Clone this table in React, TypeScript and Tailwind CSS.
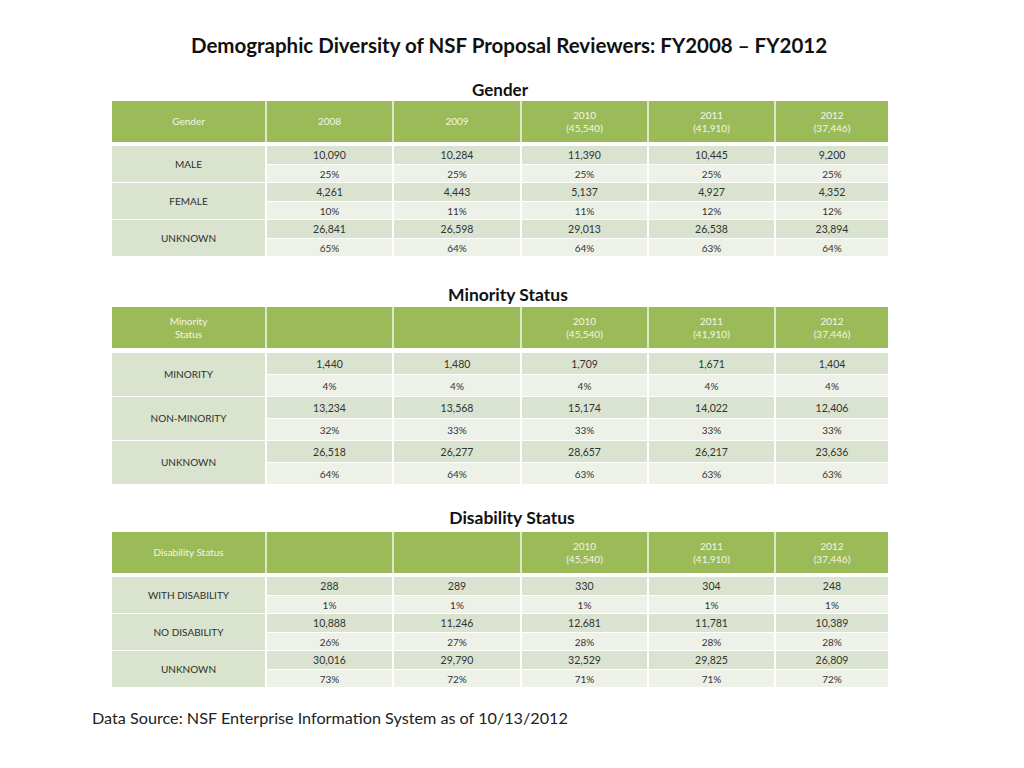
const font = { fontFamily: 'Lato, "Open Sans", sans-serif' }

type Group = { label: string; counts: string[]; pcts: string[] }

type Table = {
	title: string
	corner: string[]
	years: string[][]
	groups: Group[]
	countH: string
	pctH: string
	bodyGap: string
}

const tables: Table[] = [
	{
		title: 'Gender',
		corner: ['Gender'],
		years: [['2008'], ['2009'], ['2010', '(45,540)'], ['2011', '(41,910)'], ['2012', '(37,446)']],
		countH: 'h-[18px]',
		pctH: 'h-[17px]',
		bodyGap: 'mt-[4px]',
		groups: [
			{ label: 'MALE', counts: ['10,090', '10,284', '11,390', '10,445', '9,200'], pcts: ['25%', '25%', '25%', '25%', '25%'] },
			{ label: 'FEMALE', counts: ['4,261', '4,443', '5,137', '4,927', '4,352'], pcts: ['10%', '11%', '11%', '12%', '12%'] },
			{ label: 'UNKNOWN', counts: ['26,841', '26,598', '29,013', '26,538', '23,894'], pcts: ['65%', '64%', '64%', '63%', '64%'] }
		]
	},
	{
		title: 'Minority Status',
		corner: ['Minority', 'Status'],
		years: [[], [], ['2010', '(45,540)'], ['2011', '(41,910)'], ['2012', '(37,446)']],
		countH: 'h-[21px]',
		pctH: 'h-[21px]',
		bodyGap: 'mt-[5px]',
		groups: [
			{ label: 'MINORITY', counts: ['1,440', '1,480', '1,709', '1,671', '1,404'], pcts: ['4%', '4%', '4%', '4%', '4%'] },
			{ label: 'NON-MINORITY', counts: ['13,234', '13,568', '15,174', '14,022', '12,406'], pcts: ['32%', '33%', '33%', '33%', '33%'] },
			{ label: 'UNKNOWN', counts: ['26,518', '26,277', '28,657', '26,217', '23,636'], pcts: ['64%', '64%', '63%', '63%', '63%'] }
		]
	},
	{
		title: 'Disability Status',
		corner: ['Disability Status'],
		years: [[], [], ['2010', '(45,540)'], ['2011', '(41,910)'], ['2012', '(37,446)']],
		countH: 'h-[18px]',
		pctH: 'h-[17px]',
		bodyGap: 'mt-[4px]',
		groups: [
			{ label: 'WITH DISABILITY', counts: ['288', '289', '330', '304', '248'], pcts: ['1%', '1%', '1%', '1%', '1%'] },
			{ label: 'NO DISABILITY', counts: ['10,888', '11,246', '12,681', '11,781', '10,389'], pcts: ['26%', '27%', '28%', '28%', '28%'] },
			{ label: 'UNKNOWN', counts: ['30,016', '29,790', '32,529', '29,825', '26,809'], pcts: ['73%', '72%', '71%', '71%', '72%'] }
		]
	}
]

const cols = 'grid grid-cols-[153px_125px_126px_125px_125px_112px] gap-x-[2px]'

function DataTable({ table }: { table: Table }) {
	return (
		<div>
			<div className={`${cols} h-[41px] bg-[#dce8c6]`}>
				{[table.corner, ...table.years].map((lines, i) => (
					<div
						key={i}
						className="flex flex-col items-center justify-center bg-[#9bbb59] text-[10px] leading-[13px] text-[#f1f6e4]"
					>
						{lines.map((l) => (
							<span key={l}>{l}</span>
						))}
					</div>
				))}
			</div>
			<div className={`${cols} ${table.bodyGap} gap-y-px bg-white`}>
				{table.groups.map((g) => (
					<>
						<div
							key={g.label}
							className="row-span-2 flex items-center justify-center bg-[#d9e3cd] text-[10px] text-[#2f2f2f]"
						>
							{g.label}
						</div>
						{g.counts.map((c, i) => (
							<div
								key={`c${i}`}
								className={`${table.countH} flex items-center justify-center bg-[#dae3d0] text-[10.5px] leading-[14px] text-[#333]`}
							>
								{c}
							</div>
						))}
						{g.pcts.map((p, i) => (
							<div
								key={`p${i}`}
								className={`${table.pctH} flex items-center justify-center bg-[#edf1e7] text-[10px] leading-[14px] text-[#333]`}
							>
								{p}
							</div>
						))}
					</>
				))}
			</div>
		</div>
	)
}

export default function App() {
	return (
		<div className="h-[768px] w-[1024px] bg-white text-[#111]" style={font}>
			<div className="pt-[32px] pr-[6px] text-center text-[20.5px] font-bold leading-[26px]">
				Demographic Diversity of NSF Proposal Reviewers: FY2008 – FY2012
			</div>
			<div className="ml-[112px] w-[776px]">
				<div className="mt-[22px] h-[20px] text-center text-[17px] font-bold leading-[20px]">
					{tables[0].title}
				</div>
				<div className="mt-[1px]">
					<DataTable table={tables[0]} />
				</div>
				<div className="mt-[29px] h-[20px] pl-[16px] text-center text-[17.5px] font-bold leading-[20px]">
					{tables[1].title}
				</div>
				<div className="mt-[2px]">
					<DataTable table={tables[1]} />
				</div>
				<div className="mt-[24px] h-[20px] pl-[24px] text-center text-[17.5px] font-bold leading-[20px]">
					{tables[2].title}
				</div>
				<div className="mt-[4px]">
					<DataTable table={tables[2]} />
				</div>
			</div>
			<div className="mt-[19px] pl-[92px] text-[16.2px] leading-[24px] text-[#222]">
				Data Source: NSF Enterprise Information System as of 10/13/2012
			</div>
		</div>
	)
}
